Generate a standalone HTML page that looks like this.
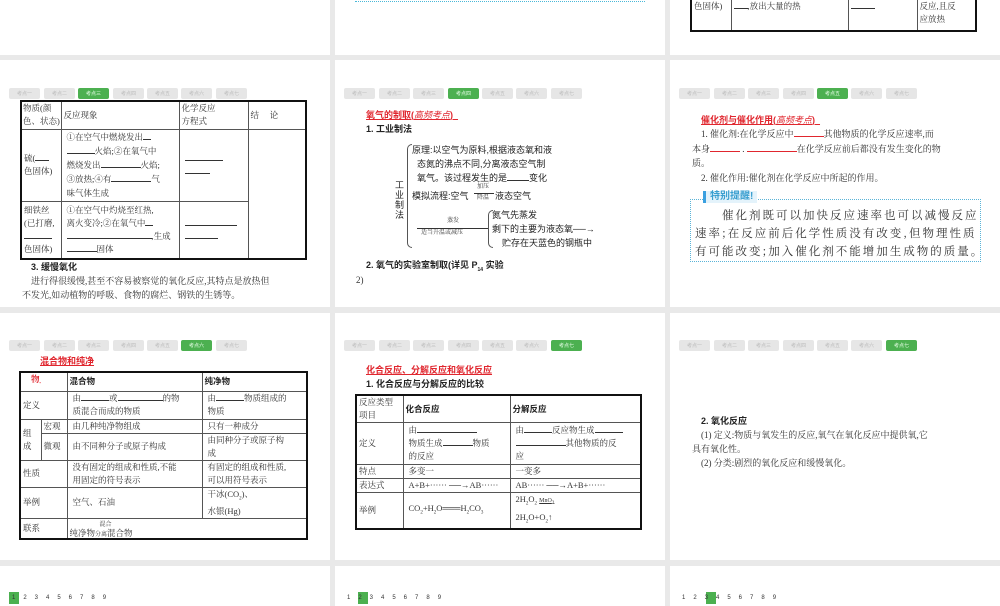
<!DOCTYPE html>
<html><head><meta charset="utf-8">
<style>
*{margin:0;padding:0;box-sizing:border-box}
body{width:1000px;height:600px;background:#e9e9e9;position:relative;overflow:hidden;font-family:"Liberation Serif","Noto Serif CJK SC",serif;font-size:9px;color:#333}
.s{position:absolute;background:#fff;overflow:hidden}
.a{position:absolute;white-space:nowrap;line-height:1.2}
.b{font-family:"Liberation Sans","Noto Sans CJK SC",sans-serif;font-weight:bold;color:#222}
.r{color:#e0262e;font-family:"Liberation Sans","Noto Sans CJK SC",sans-serif;font-weight:bold;text-decoration:underline}
.tab{position:absolute;width:31px;height:11px;background:#e6e6e6;border-radius:2px;font-size:5px;color:#bbb;text-align:center;line-height:11px;font-family:"Noto Sans CJK SC",sans-serif}
.tab.on{background:#4cb050;color:#e8ffe8}
table{position:absolute;border-collapse:collapse;border:2px solid #111;table-layout:fixed}
td{border:1px solid #555;vertical-align:middle;padding:0 2px;font-size:8.5px;line-height:13px;color:#333;white-space:nowrap;overflow:hidden}
.u{display:inline-block;border-bottom:1px solid #333;height:8px;vertical-align:baseline}
.pg{position:absolute;font-size:6px;color:#333;font-family:"Liberation Sans",sans-serif}
</style></head><body>

<!-- row1 -->
<div class="s" style="left:0;top:0;width:330px;height:55px"></div>
<div class="s" style="left:335px;top:0;width:330px;height:55px"><div style="position:absolute;left:20px;top:1px;width:290px;border-top:1px dotted #4ab8d8"></div></div>
<div class="s" style="left:670px;top:0;width:330px;height:55px">
<table style="left:20px;top:-20px;width:287px;height:52px"><tr>
<td style="width:40px">色固体)</td><td style="width:117px"><span class="u" style="width:14px"></span>,放出大量的热</td><td style="width:69px"><span class="u" style="width:24px"></span></td><td>是化合<br>反应,且反<br>应放热</td></tr></table></div>

<!-- row2 col1 -->
<div class="s" style="left:0;top:60px;width:330px;height:247px">
<div class="tab" style="left:9px;top:28px">考点一</div><div class="tab" style="left:44px;top:28px">考点二</div><div class="tab on" style="left:78px;top:28px">考点三</div><div class="tab" style="left:113px;top:28px">考点四</div><div class="tab" style="left:147px;top:28px">考点五</div><div class="tab" style="left:181px;top:28px">考点六</div><div class="tab" style="left:216px;top:28px">考点七</div>
<table style="left:20px;top:40px;width:287px;height:160px">
<tr style="height:28px"><td style="width:40px;padding:0 1px">物质(颜<br>色、状态)</td><td style="width:118px">反应现象</td><td style="width:69px">化学反应<br>方程式</td><td>结 &nbsp; &nbsp; 论</td></tr>
<tr style="height:72px"><td>硫(<span class="u" style="width:14px"></span><br>色固体)</td><td style="padding-left:5px;line-height:14px">①在空气中燃烧发出<span class="u" style="width:8px"></span><br><span class="u" style="width:28px"></span>火焰;②在氧气中<br>燃烧发出<span class="u" style="width:40px"></span>火焰;<br>③放热;④有<span class="u" style="width:40px"></span>气<br>味气体生成</td><td style="padding-left:5px"><span class="u" style="width:38px"></span><br><span class="u" style="width:25px"></span></td><td rowspan="2"></td></tr>
<tr style="height:58px"><td>细铁丝<br>(已打磨,<br><span class="u" style="width:28px"></span><br>色固体)</td><td style="padding-left:5px">①在空气中灼烧至红热,<br>离火变冷;②在氧气中<span class="u" style="width:8px"></span><br><span class="u" style="width:85px"></span>,生成<br><span class="u" style="width:30px"></span>固体</td><td style="padding-left:5px"><span class="u" style="width:52px"></span><br><span class="u" style="width:33px"></span></td></tr></table>
<div class="a b" style="left:31px;top:202px">3. 缓慢氧化</div>
<div class="a" style="left:31px;top:216px">进行得很缓慢,甚至不容易被察觉的氧化反应,其特点是放热但</div>
<div class="a" style="left:22px;top:230px">不发光,如动植物的呼吸、食物的腐烂、钢铁的生锈等。</div>
</div>

<!-- row2 col2 -->
<div class="s" style="left:335px;top:60px;width:330px;height:247px">
<div class="tab" style="left:9px;top:28px">考点一</div><div class="tab" style="left:44px;top:28px">考点二</div><div class="tab" style="left:78px;top:28px">考点三</div><div class="tab on" style="left:113px;top:28px">考点四</div><div class="tab" style="left:147px;top:28px">考点五</div><div class="tab" style="left:181px;top:28px">考点六</div><div class="tab" style="left:216px;top:28px">考点七</div>
<div class="a r" style="left:31px;top:50px">氧气的制取(<span style="font-weight:normal;font-style:italic">高频考点</span>)&nbsp;&nbsp;</div>
<div class="a b" style="left:31px;top:64px">1. 工业制法</div>
<div class="a b" style="left:60px;top:120px;line-height:10px;font-weight:normal;font-size:9px;white-space:normal;width:10px">工业制法</div>
<div style="position:absolute;left:72px;top:84px;width:5px;height:104px;border:1px solid #555;border-right:none;border-radius:5px 0 0 5px"></div>
<div class="a b" style="left:77px;top:83px;font-weight:normal;line-height:14px">原理:以空气为原料,根据液态氧和液<br>&nbsp;&nbsp;态氮的沸点不同,分离液态空气制<br>&nbsp;&nbsp;氧气。该过程发生的是<span class="u" style="width:22px"></span>变化</div>
<div class="a b" style="left:77px;top:131px;font-weight:normal">模拟流程:空气</div>
<div class="a" style="left:142px;top:124px;font-size:6px">加压</div><div style="position:absolute;left:139px;top:133px;width:20px;border-top:1px solid #333"></div><div class="a" style="left:142px;top:135px;font-size:6px">降温</div>
<div class="a b" style="left:160px;top:131px;font-weight:normal">液态空气</div>
<div class="a" style="left:112px;top:158px;font-size:6px">蒸发</div><div style="position:absolute;left:82px;top:168px;width:72px;border-top:1px solid #333"></div><div class="a" style="left:86px;top:170px;font-size:6px">适当升温或减压</div>
<div style="position:absolute;left:153px;top:150px;width:5px;height:38px;border:1px solid #555;border-right:none;border-radius:5px 0 0 5px"></div>
<div class="a b" style="left:157px;top:148px;font-weight:normal;line-height:14px">氮气先蒸发<br>剩下的主要为液态氧──→<br>&nbsp;&nbsp;&nbsp;&nbsp;贮存在天蓝色的钢瓶中</div>
<div class="a b" style="left:31px;top:200px">2. 氧气的实验室制取(详见 P<sub style="font-size:5px">14</sub> 实验</div>
<div class="a" style="left:21px;top:215px">2)</div>
</div>

<!-- row2 col3 -->
<div class="s" style="left:670px;top:60px;width:330px;height:247px">
<div class="tab" style="left:9px;top:28px">考点一</div><div class="tab" style="left:44px;top:28px">考点二</div><div class="tab" style="left:78px;top:28px">考点三</div><div class="tab" style="left:113px;top:28px">考点四</div><div class="tab on" style="left:147px;top:28px">考点五</div><div class="tab" style="left:181px;top:28px">考点六</div><div class="tab" style="left:216px;top:28px">考点七</div>
<div class="a r" style="left:31px;top:55px">催化剂与催化作用(<span style="font-weight:normal;font-style:italic">高频考点</span>)&nbsp;&nbsp;</div>
<div class="a" style="left:31px;top:69px">1. 催化剂:在化学反应中<span class="u" style="width:30px;border-color:#e0262e"></span>其他物质的化学反应速率,而</div>
<div class="a" style="left:22px;top:84px">本身<span class="u" style="width:30px;border-color:#e0262e"></span> . <span class="u" style="width:50px;border-color:#e0262e"></span>在化学反应前后都没有发生变化的物</div>
<div class="a" style="left:22px;top:98px">质。</div>
<div class="a" style="left:31px;top:113px">2. 催化作用:催化剂在化学反应中所起的作用。</div>
<div style="position:absolute;left:20px;top:139px;width:291px;height:63px;border:1px dotted #5ab4d8"></div>
<div class="a" style="left:33px;top:131px;background:#e4f3fb;color:#3a9fd0;font-family:'Liberation Sans','Noto Sans CJK SC',sans-serif;font-weight:bold;font-size:10px;padding:0 4px;border-left:3px solid #3aa0e0">特别提醒!</div>
<div class="a" style="left:25px;top:146px;font-size:11.5px;line-height:18px;letter-spacing:2px;font-family:'Noto Serif CJK SC',serif;white-space:normal;width:290px;text-indent:27px">催化剂既可以加快反应速率也可以减慢反应速率;在反应前后化学性质没有改变,但物理性质有可能改变;加入催化剂不能增加生成物的质量。</div>
</div>

<!-- row3 col1 -->
<div class="s" style="left:0;top:313px;width:330px;height:247px">
<div class="tab" style="left:9px;top:27px">考点一</div><div class="tab" style="left:44px;top:27px">考点二</div><div class="tab" style="left:78px;top:27px">考点三</div><div class="tab" style="left:113px;top:27px">考点四</div><div class="tab" style="left:147px;top:27px">考点五</div><div class="tab on" style="left:181px;top:27px">考点六</div><div class="tab" style="left:216px;top:27px">考点七</div>
<div class="a r" style="left:40px;top:43px">混合物和纯净</div>
<table style="left:19px;top:58px;width:289px;height:168px">
<tr style="height:19px"><td style="width:21px;color:#e0262e;font-weight:bold;vertical-align:top;padding-left:10px;border-right:none">物_</td><td style="width:26px;border-left:none"></td><td style="width:135px" class="b">混合物</td><td class="b">纯净物</td></tr>
<tr style="height:28px"><td colspan="2">定义</td><td style="padding-left:5px">由<span class="u" style="width:28px"></span>或<span class="u" style="width:45px"></span>的物<br>质混合而成的物质</td><td style="padding-left:5px">由<span class="u" style="width:28px"></span>物质组成的<br>物质</td></tr>
<tr style="height:14px"><td rowspan="2">组<br>成</td><td>宏观</td><td style="padding-left:5px">由几种纯净物组成</td><td style="padding-left:5px">只有一种成分</td></tr>
<tr style="height:26px"><td>微观</td><td style="padding-left:5px">由不同种分子或原子构成</td><td style="padding-left:5px">由同种分子或原子构<br>成</td></tr>
<tr style="height:27px"><td colspan="2">性质</td><td style="padding-left:5px">没有固定的组成和性质,不能<br>用固定的符号表示</td><td style="padding-left:5px">有固定的组成和性质,<br>可以用符号表示</td></tr>
<tr style="height:27px"><td colspan="2">举例</td><td style="padding-left:5px">空气、石油</td><td style="padding-left:5px">干冰(CO<sub style="font-size:5px">2</sub>)、<br>水银(Hg)</td></tr>
<tr><td colspan="2">联系</td><td colspan="2" style="line-height:1.1"><span style="font-size:6px;margin-left:30px">混合</span><br>纯净物<span style="font-size:6px">分离</span>混合物</td></tr>
</table>
</div>

<!-- row3 col2 -->
<div class="s" style="left:335px;top:313px;width:330px;height:247px">
<div class="tab" style="left:9px;top:27px">考点一</div><div class="tab" style="left:44px;top:27px">考点二</div><div class="tab" style="left:78px;top:27px">考点三</div><div class="tab" style="left:113px;top:27px">考点四</div><div class="tab" style="left:147px;top:27px">考点五</div><div class="tab" style="left:181px;top:27px">考点六</div><div class="tab on" style="left:216px;top:27px">考点七</div>
<div class="a r" style="left:31px;top:52px">化合反应、分解反应和氧化反应</div>
<div class="a b" style="left:31px;top:66px">1. 化合反应与分解反应的比较</div>
<table style="left:20px;top:81px;width:287px;height:128px">
<tr style="height:27px"><td style="width:47px">反应类型<br>项目</td><td style="width:107px" class="b">化合反应</td><td class="b">分解反应</td></tr>
<tr style="height:42px"><td>定义</td><td style="padding-left:5px">由<span class="u" style="width:60px"></span><br>物质生成<span class="u" style="width:30px"></span>物质<br>的反应</td><td style="padding-left:5px">由<span class="u" style="width:28px"></span>反应物生成<span class="u" style="width:28px"></span><br><span class="u" style="width:50px"></span>其他物质的反<br>应</td></tr>
<tr style="height:14px"><td>特点</td><td style="padding-left:5px">多变一</td><td style="padding-left:5px">一变多</td></tr>
<tr style="height:14px"><td>表达式</td><td style="padding-left:5px">A+B+······ ──→AB······</td><td style="padding-left:5px">AB······ ──→A+B+······</td></tr>
<tr><td>举例</td><td style="padding-left:5px">CO<sub style="font-size:5px">2</sub>+H<sub style="font-size:5px">2</sub>O═══H<sub style="font-size:5px">2</sub>CO<sub style="font-size:5px">3</sub></td><td style="padding-left:5px">2H<sub style="font-size:5px">2</sub>O<sub style="font-size:5px">2</sub> <u style="font-size:6px">MnO<sub>2</sub></u><br>2H<sub style="font-size:5px">2</sub>O+O<sub style="font-size:5px">2</sub>↑</td></tr>
</table>
</div>

<!-- row3 col3 -->
<div class="s" style="left:670px;top:313px;width:330px;height:247px">
<div class="tab" style="left:9px;top:27px">考点一</div><div class="tab" style="left:44px;top:27px">考点二</div><div class="tab" style="left:78px;top:27px">考点三</div><div class="tab" style="left:113px;top:27px">考点四</div><div class="tab" style="left:147px;top:27px">考点五</div><div class="tab" style="left:181px;top:27px">考点六</div><div class="tab on" style="left:216px;top:27px">考点七</div>
<div class="a b" style="left:31px;top:103px">2. 氧化反应</div>
<div class="a" style="left:31px;top:117px">(1) 定义:物质与氧发生的反应,氧气在氧化反应中提供氧,它</div>
<div class="a" style="left:22px;top:131px">具有氧化性。</div>
<div class="a" style="left:31px;top:145px">(2) 分类:剧烈的氧化反应和缓慢氧化。</div>
</div>

<!-- row4 -->
<div class="s" style="left:0;top:566px;width:330px;height:40px">
<div style="position:absolute;left:9px;top:26px;width:10px;height:12px;background:#4cb050"></div>
<div class="pg" style="left:12px;top:29px;letter-spacing:8px">123456789</div></div>
<div class="s" style="left:335px;top:566px;width:330px;height:40px">
<div style="position:absolute;left:23px;top:26px;width:10px;height:12px;background:#4cb050"></div>
<div class="pg" style="left:12px;top:29px;letter-spacing:8px">123456789</div></div>
<div class="s" style="left:670px;top:566px;width:330px;height:40px">
<div style="position:absolute;left:36px;top:26px;width:10px;height:12px;background:#4cb050"></div>
<div class="pg" style="left:12px;top:29px;letter-spacing:8px">123456789</div></div>
</body></html>
